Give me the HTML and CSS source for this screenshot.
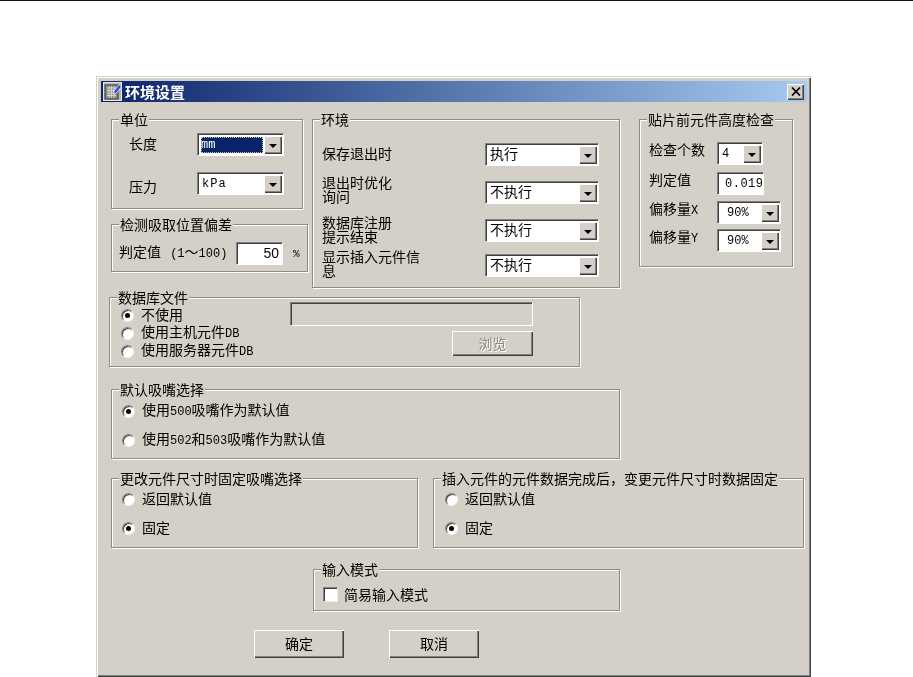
FILE: index.html
```html
<!DOCTYPE html>
<html lang="zh-CN">
<head>
<meta charset="utf-8">
<title>环境设置</title>
<link rel="stylesheet" href="styles.css">
</head>
<body>
<div class="topline"></div>
<div class="window">
  <div class="titlebar">
    <svg class="app-icon" viewBox="0 0 19 19" width="19" height="19">
      <rect x="0.5" y="0.5" width="18" height="18" fill="#b8b4ac" stroke="#e8e6e0"/>
      <rect x="2" y="3" width="13" height="14" fill="#8c8a84" stroke="#3c3c3c"/>
      <path d="M4 6h9M4 8.500h9M4 11h9M4 13.500h9M6 4v12M8.500 4v12M11 4v12" stroke="#d8d6d0" stroke-width="1"/>
      <path d="M11 9 16 2.500 18.500 4.500 13.500 11 10.500 12Z" fill="#2a50e8" stroke="#ffffff" stroke-width="0.7"/>
    </svg>
    <span class="title-text">环境设置</span>
    <span class="close-btn"><svg viewBox="0 0 10 9" width="10" height="9"><path d="M1 0.500 9 8.500M9 0.500 1 8.500" fill="none" stroke="#000" stroke-width="1.700"/></svg></span>
  </div>
  <div class="body">
    <div class="top-row">
      <div class="left-col">
        <section class="group unit-group">
          <h3 class="legend">单位</h3>
          <div class="unit-grid">
            <span class="label nudge-up">长度</span>
            <div class="combo w87"><span class="value selected latin">mm</span><span class="arrow"></span></div>
            <span class="label nudge-down">压力</span>
            <div class="combo w87"><span class="value latin spaced">kPa</span><span class="arrow"></span></div>
          </div>
        </section>
        <section class="group detect-group">
          <h3 class="legend">检测吸取位置偏差</h3>
          <div class="detect-row">
            <span class="label detect-label">判定值 <span class="latin range-start">(1</span>～<span class="latin">100)</span></span>
            <div class="textbox w47 right">50</div>
            <span class="latin percent">%</span>
          </div>
        </section>
      </div>
      <section class="group env-group">
        <h3 class="legend">环境</h3>
        <div class="env-grid">
          <span class="label">保存退出时</span>
          <div class="combo w114"><span class="value">执行</span><span class="arrow"></span></div>
          <span class="label tight lift-a">退出时优化<br>询问</span>
          <div class="combo w114"><span class="value">不执行</span><span class="arrow"></span></div>
          <span class="label tight lift-b">数据库注册<br>提示结束</span>
          <div class="combo w114"><span class="value">不执行</span><span class="arrow"></span></div>
          <span class="label tight lift-c">显示插入元件信<br>息</span>
          <div class="combo w114"><span class="value">不执行</span><span class="arrow"></span></div>
        </div>
      </section>
      <section class="group check-group">
        <h3 class="legend">贴片前元件高度检查</h3>
        <div class="check-grid">
          <span class="label nudge-up">检查个数</span>
          <div class="combo w46"><span class="value latin">4</span><span class="arrow"></span></div>
          <span class="label nudge-up">判定值</span>
          <div class="textbox w47 latin value-num">0.019</div>
          <span class="label nudge-up">偏移量<span class="latin">X</span></span>
          <div class="combo w64"><span class="value latin centered">90%</span><span class="arrow"></span></div>
          <span class="label nudge-up">偏移量<span class="latin">Y</span></span>
          <div class="combo w64"><span class="value latin centered">90%</span><span class="arrow"></span></div>
        </div>
      </section>
    </div>

    <section class="group db-group">
      <h3 class="legend">数据库文件</h3>
      <div class="db-list">
        <div class="option"><span class="radio checked"></span><span class="opt-text">不使用</span></div>
        <div class="option"><span class="radio"></span><span class="opt-text">使用主机元件<span class="latin">DB</span></span></div>
        <div class="option"><span class="radio"></span><span class="opt-text">使用服务器元件<span class="latin">DB</span></span></div>
      </div>
      <div class="db-side">
        <div class="textbox disabled"></div>
        <div class="button browse">浏览</div>
      </div>
    </section>

    <section class="group default-group">
      <h3 class="legend">默认吸嘴选择</h3>
      <div class="option"><span class="radio checked"></span><span class="opt-text">使用<span class="latin">500</span>吸嘴作为默认值</span></div>
      <div class="option"><span class="radio"></span><span class="opt-text">使用<span class="latin">502</span>和<span class="latin">503</span>吸嘴作为默认值</span></div>
    </section>

    <div class="pair-row">
      <section class="group pair-left">
        <h3 class="legend">更改元件尺寸时固定吸嘴选择</h3>
        <div class="option"><span class="radio"></span><span class="opt-text">返回默认值</span></div>
        <div class="option"><span class="radio checked"></span><span class="opt-text">固定</span></div>
      </section>
      <section class="group pair-right">
        <h3 class="legend">插入元件的元件数据完成后，变更元件尺寸时数据固定</h3>
        <div class="option"><span class="radio"></span><span class="opt-text">返回默认值</span></div>
        <div class="option"><span class="radio checked"></span><span class="opt-text">固定</span></div>
      </section>
    </div>

    <section class="group input-group">
      <h3 class="legend">输入模式</h3>
      <div class="option check-option"><span class="checkbox"></span><span class="opt-text">简易输入模式</span></div>
    </section>

    <div class="actions">
      <div class="button action">确定</div>
      <div class="button action">取消</div>
    </div>
  </div>
</div>
</body>
</html>
```
FILE: styles.css
```css
* { box-sizing: border-box; }
html, body { margin: 0; padding: 0; background: #fff; }
body {
  width: 913px;
  height: 677px;
  overflow: hidden;
  font-family: "Noto Sans CJK SC", "Liberation Sans", sans-serif;
  font-size: 14px;
  line-height: 14px;
  color: #000;
}
.topline { height: 1px; background: #111; }
.window {
  width: 715px;
  height: 601px;
  margin: 75px 0 0 96px;
  padding: 5px 4px 0 5px;
  background: #d4d0c8;
  box-shadow: inset 1px 1px 0 #d4d0c8, inset 2px 2px 0 #fff, inset -1px -1px 0 #404040, inset -2px -2px 0 #808080;
  filter: blur(0.3px);
}
.titlebar {
  height: 21px;
  display: flex;
  align-items: center;
  padding: 0 3px 0 2px;
  background: linear-gradient(90deg, #0a246a, #a6caf0);
}
.app-icon { flex: none; }
.title-text { margin-left: 3px; color: #fff; font-weight: 700; font-size: 15px; line-height: 21px; }
.close-btn {
  margin-left: auto;
  width: 17px;
  height: 16px;
  display: flex;
  align-items: center;
  justify-content: center;
  background: #d4d0c8;
  box-shadow: inset 1px 1px 0 #fff, inset -1px -1px 0 #404040, inset -2px -2px 0 #808080;
}
.body { padding: 17px 0 0 10px; }
.latin { font-family: "Liberation Mono", monospace; font-size: 12px; }

.group {
  position: relative;
  border: 1px solid #8e8b85;
  box-shadow: inset 1px 1px 0 #fff, 1px 1px 0 #fff;
}
.legend {
  position: absolute;
  top: -8px;
  left: 7px;
  margin: 0;
  padding: 0 1px;
  background: #d4d0c8;
  font: inherit;
  white-space: nowrap;
}

.top-row { display: flex; align-items: flex-start; height: 169px; }
.left-col { width: 197px; flex: none; margin-right: 4px; }
.unit-group { width: 192px; height: 90px; padding: 13px 0 0 17px; }
.unit-grid { display: grid; grid-template-columns: 68px 87px; grid-template-rows: 39px 23px; align-items: start; }
.label { display: block; white-space: nowrap; }
.unit-grid .label { line-height: 23px; }
.nudge-up { position: relative; top: -1px; }
.nudge-down { position: relative; top: 3px; }
.detect-group { width: 197px; height: 48px; margin-top: 15px; padding: 17px 0 0 7px; }
.detect-row { display: flex; align-items: center; height: 23px; }
.detect-label { width: 117px; padding-bottom: 2px; }
.range-start { margin-left: 6px; }
.percent { margin-left: 10px; font-size: 11px; }

.env-group { width: 308px; height: 169px; flex: none; padding: 23px 0 0 9px; }
.env-grid { display: grid; grid-template-columns: 163px 114px; grid-template-rows: 38px 38px 35px 23px; align-items: start; }
.env-grid .label { line-height: 20px; }
.env-grid .label.tight { line-height: 14px; }
.env-grid .label.lift-a { margin-top: -6px; }
.env-grid .label.lift-b { margin-top: -4px; }
.env-grid .label.lift-c { margin-top: -5px; }
.env-grid .value { line-height: 20px; margin-top: -3px; }

.check-group { width: 154px; height: 148px; flex: none; margin-left: 19px; padding: 22px 0 0 9px; }
.check-grid { display: grid; grid-template-columns: 68px auto; grid-template-rows: 30px 29px 28px 24px; align-items: start; }
.check-grid .label { line-height: 16px; }

.combo {
  display: flex;
  height: 23px;
  padding: 2px 1px 1px 2px;
  background: #fff;
  border: 1px solid;
  border-color: #808080 #fff #fff #808080;
  box-shadow: inset 1px 1px 0 #404040;
}
.w87 { width: 87px; }
.w114 { width: 114px; }
.w46 { width: 46px; }
.w64 { width: 64px; }
.w47 { width: 47px; }
.value { flex: 1; min-width: 0; padding-left: 2px; line-height: 19px; white-space: nowrap; }
.value.selected {
  margin: 1px;
  padding-left: 0;
  background: #0a246a;
  color: #fff;
  line-height: 16px;
  outline: 1px dotted #c8c090;
  outline-offset: -1px;
}
.value.spaced { letter-spacing: 1px; }
.value.centered { padding-left: 7px; }
.arrow {
  position: relative;
  flex: none;
  width: 18px;
  background: #d4d0c8;
  box-shadow: inset 1px 1px 0 #fff, inset -1px -1px 0 #404040, inset -2px -2px 0 #808080;
}
.arrow::after {
  content: "";
  position: absolute;
  left: 5px;
  top: 8px;
  border: 4px solid transparent;
  border-top: 4px solid #000;
  border-bottom: 0;
}

.textbox {
  height: 23px;
  padding: 0 3px;
  line-height: 21px;
  background: #fff;
  border: 1px solid;
  border-color: #808080 #fff #fff #808080;
  box-shadow: inset 1px 1px 0 #404040;
}
.textbox.right { text-align: right; font-family: "Liberation Sans", sans-serif; padding-right: 3px; }
.value-num { letter-spacing: 0.5px; padding: 1px 0 0 7px; }
.textbox.disabled { width: 243px; height: 24px; background: #d4d0c8; }

.option { display: flex; align-items: center; height: 18px; }
.opt-text { margin-bottom: 2px; }
.radio {
  position: relative;
  flex: none;
  width: 13px;
  height: 13px;
  margin-right: 7px;
  border-radius: 50%;
  background: #fff;
  border: 1px solid;
  border-color: #808080 #f4f4f4 #f4f4f4 #808080;
  box-shadow: inset 1px 1px 0 #404040;
}
.radio.checked::after {
  content: "";
  position: absolute;
  left: 3px;
  top: 3px;
  width: 5px;
  height: 5px;
  border-radius: 50%;
  background: #000;
}
.checkbox {
  flex: none;
  width: 15px;
  height: 15px;
  margin-right: 6px;
  background: #fff;
  border: 1px solid;
  border-color: #808080 #eee #eee #808080;
  box-shadow: inset 1px 1px 0 #404040;
}

.db-group { display: flex; width: 471px; height: 70px; margin: 9px 0 0 -2px; padding: 8px 0 0 11px; }
.db-list { width: 169px; flex: none; }
.db-side { width: 243px; margin-top: -4px; display: flex; flex-direction: column; align-items: flex-end; }
.button {
  display: flex;
  align-items: center;
  justify-content: center;
  padding-bottom: 2px;
  background: #d4d0c8;
  box-shadow: inset 1px 1px 0 #fff, inset -1px -1px 0 #404040, inset -2px -2px 0 #808080;
}
.browse {
  width: 81px;
  height: 25px;
  margin-top: 5px;
  color: #8a8a86;
  text-shadow: 1px 1px 0 #fff;
}

.default-group { width: 509px; height: 70px; margin-top: 22px; padding: 12px 0 0 10px; }
.default-group .option + .option, .pair-left .option + .option, .pair-right .option + .option { margin-top: 11px; }

.pair-row { display: flex; gap: 15px; margin-top: 19px; }
.pair-left { width: 307px; height: 70px; padding: 11px 0 0 10px; }
.pair-right { width: 371px; height: 70px; padding: 11px 0 0 11px; }

.input-group { width: 307px; height: 42px; margin: 21px 0 0 202px; padding: 16px 0 0 9px; }
.check-option { height: 17px; }

.actions { display: flex; gap: 45px; margin: 19px 0 0 143px; }
.action { width: 90px; height: 28px; }
```
